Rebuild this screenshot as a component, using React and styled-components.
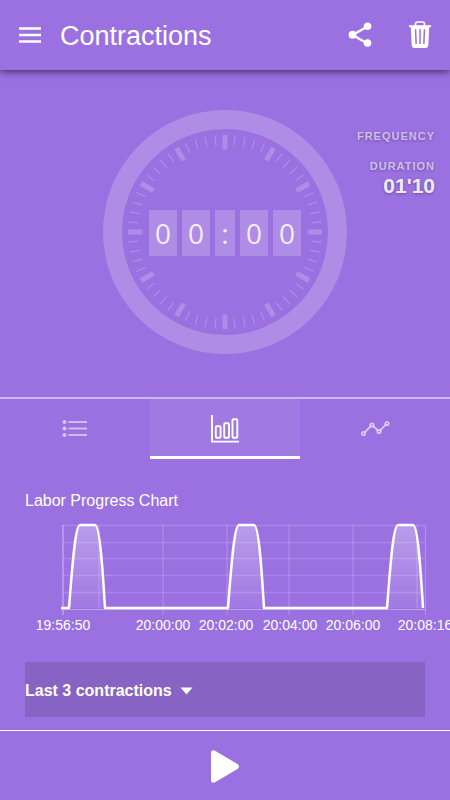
import React, { useState } from "react";
import styled, { createGlobalStyle, ThemeProvider } from "styled-components";

const theme = {
  color: {
    primary: "#9b71e2",
    field: "#8763c4",
    text: "#fff",
    soft: "rgba(255, 255, 255, 0.6)",
    shape: "rgba(255, 255, 255, 0.2)"
  }
};

const GlobalStyle = createGlobalStyle`
  * {
    box-sizing: border-box;
  }
  body {
    margin: 0;
    font-family: "Liberation Sans", Arial, sans-serif;
    -webkit-font-smoothing: antialiased;
  }
`;

const Screen = styled.div`
  display: flex;
  flex-direction: column;
  min-height: 100vh;
  overflow: hidden;
  color: ${({ theme }) => theme.color.text};
  background: ${({ theme }) => theme.color.primary};
`;

const Header = styled.header`
  display: flex;
  align-items: center;
  height: 70px;
  padding: 0 15px;
  box-shadow: 0 1px 8px rgba(0, 0, 0, 0.7);
`;
const Title = styled.h1`
  flex: 1;
  margin: 0 0 0 15px;
  font-size: 27px;
  line-height: 32px;
  font-weight: 400;
  padding-top: 2px;
`;
const IconButton = styled.button`
  display: flex;
  padding: 0;
  border: 0;
  color: inherit;
  background: none;
  cursor: pointer;
`;
const HeaderActions = styled.div`
  display: flex;
  gap: 30px;
`;

const Timer = styled.section`
  display: grid;
  grid-template-columns: 1fr 244px 1fr;
  padding: 40px 0 43px;
`;
const Dial = styled.div`
  grid-column: 2;
  display: grid;
  place-items: center;
  > * {
    grid-area: 1 / 1;
  }
`;
const Face = styled.svg`
  display: block;
  color: ${({ theme }) => theme.color.shape};
`;
const Readout = styled.div`
  display: flex;
  gap: 5px;
  padding-top: 2px;
  font-family: "Open Sans", "Noto Sans", sans-serif;
  font-size: 28px;
  line-height: 46px;
  color: rgba(255, 255, 255, 0.85);
`;
const Digit = styled.span`
  width: ${({ $narrow }) => ($narrow ? 20 : 28)}px;
  text-align: center;
  background: ${({ theme }) => theme.color.shape};
`;

const Stats = styled.dl`
  margin: 20px 15px 0 0;
  text-align: right;
  text-shadow: 0 1px 3px rgba(0, 0, 0, 0.3);
`;
const StatName = styled.dt`
  font-size: 11px;
  line-height: 12px;
  font-weight: 700;
  letter-spacing: 1px;
  color: ${({ theme }) => theme.color.soft};
`;
const StatValue = styled.dd`
  min-height: 18px;
  margin: 0;
  font-size: 21px;
  line-height: 28px;
  font-weight: 700;
  color: rgba(255, 255, 255, 0.9);
`;

const Tabs = styled.nav`
  display: flex;
  border-top: 2px solid rgba(255, 255, 255, 0.5);
`;
const Tab = styled.button`
  flex: 1;
  display: flex;
  justify-content: center;
  align-items: center;
  height: 60px;
  padding: 2px 0 0;
  border: 0;
  border-bottom: 3px solid ${({ $active }) => ($active ? "#fff" : "transparent")};
  color: ${({ $active, theme }) => ($active ? "#fff" : theme.color.soft)};
  background: ${({ $active }) =>
    $active ? "rgba(255, 255, 255, 0.06)" : "none"};
  cursor: pointer;
`;

const Content = styled.main`
  flex: 1;
  padding: 32px 25px 13px;
`;
const ChartTitle = styled.h2`
  margin: 0 0 4px;
  font-size: 16px;
  line-height: 20px;
  font-weight: 400;
`;
const ChartSvg = styled.svg`
  display: block;
  width: 100%;
  overflow: visible;
  text {
    font-size: 14px;
    text-anchor: middle;
    fill: #fff;
  }
`;
const Filter = styled.label`
  display: flex;
  align-items: center;
  gap: 8px;
  height: 55px;
  margin-top: 27px;
  padding-top: 2px;
  background: ${({ theme }) => theme.color.field};
`;
const Select = styled.select`
  appearance: none;
  padding: 0;
  border: 0;
  font: 700 16px/20px "Liberation Sans", Arial, sans-serif;
  color: inherit;
  background: none;
  cursor: pointer;
`;

const Footer = styled.footer`
  display: flex;
  justify-content: center;
  align-items: center;
  height: 70px;
  padding-top: 2px;
  border-top: 1px solid #fff;
`;

const MenuIcon = () => (
  <svg width="30" height="30" stroke="currentColor" strokeWidth="2.4">
    <path d="M4 8.5h22M4 15h22M4 21.5h22" />
  </svg>
);

const ShareIcon = () => (
  <svg width="30" height="30" fill="currentColor">
    <path
      d="M22.5 6.5L7.5 15l15 8.5"
      fill="none"
      stroke="currentColor"
      strokeWidth="2.4"
    />
    <circle cx="7.5" cy="14.7" r="3.9" />
    <circle cx="22.5" cy="6.2" r="3.8" />
    <circle cx="22.5" cy="23" r="3.8" />
  </svg>
);

const TrashIcon = () => (
  <svg width="30" height="30" fill="none" stroke="currentColor">
    <path d="M10.5 6V4q0-2 2-2h5q2 0 2 2v2" strokeWidth="1.6" />
    <path d="M4 6.2h22" strokeWidth="2" />
    <path
      fill="currentColor"
      fillRule="evenodd"
      stroke="none"
      d="M5.7 6h18.6l-1 19.6q-.2 2.4-2.4 2.4H9.1q-2.2 0-2.4-2.4zM9.8 9.2l.6 14.8h1.5l-.6-14.8zM14.3 9.2v14.8h1.5V9.2zM18.7 9.2l-.6 14.8h1.5l.6-14.8z"
    />
  </svg>
);

const ListIcon = () => (
  <svg width="30" height="30" fill="currentColor">
    {[8, 14.5, 21].map(y => (
      <g key={y}>
        <circle cx="4.5" cy={y} r="2" />
        <path d={`M8.5 ${y}h18.5`} stroke="currentColor" strokeWidth="1.8" />
      </g>
    ))}
  </svg>
);

const BarsIcon = () => (
  <svg width="30" height="30" fill="none" stroke="currentColor" strokeWidth="1.9">
    <path d="M2 1v26.600h27" />
    <rect x="5.8" y="12.3" width="4.8" height="11.4" rx="1" />
    <rect x="14.2" y="9.3" width="4.8" height="14.4" rx="1" />
    <rect x="22.5" y="5.3" width="4.8" height="18.4" rx="1" />
  </svg>
);

const trend = [[3.5, 19.5], [12, 11], [19, 17.5], [27, 9.5]];
const TrendIcon = () => (
  <svg width="30" height="30" fill="none" stroke="currentColor" strokeWidth="1.8">
    <path d="M4.7 18.3l6.1-6.1M13.2 12.1l4.6 4.300M20.200 16.300l5.600-5.600" />
    {trend.map(([x, y]) => (
      <circle key={x} cx={x} cy={y} r="1.7" />
    ))}
  </svg>
);

const Caret = () => (
  <svg width="13" height="8" fill="currentColor">
    <path d="M.5.500h12L6.500 7.500z" />
  </svg>
);

const PlayIcon = () => (
  <svg width="30" height="36" fill="currentColor">
    <path d="M1 4.500Q1 0 5 1.700L27.500 15Q30.500 17.500 27.500 20L5 33.300Q1 35 1 30.500z" />
  </svg>
);

const ClockFace = () => (
  <Face width="244" height="244" viewBox="-122 -122 244 244" aria-hidden="true">
    <circle r="112.5" fill="none" stroke="currentColor" strokeWidth="19" />
    {Array.from({ length: 60 }, (_, i) => {
      const major = i % 5 === 0;
      return (
        <line
          key={i}
          y1={-97}
          y2={major ? -82.5 : -87}
          stroke="currentColor"
          strokeWidth={major ? 5 : 1.2}
          transform={`rotate(${i * 6})`}
        />
      );
    })}
  </Face>
);

const rows = [10, 27, 43, 60, 77];
const columns = [74, 138, 202, 264, 328, 392];
const labels = [
  [38, "19:56:50"],
  [138, "20:00:00"],
  [201, "20:02:00"],
  [265, "20:04:00"],
  [328, "20:06:00"],
  [400, "20:08:16"]
];
// x where every contraction starts
const peaks = [44, 203, 362];
const hump = x =>
  `L${x} 93C${x + 3} 55 ${x + 6} 10 ${x + 11} 10H${x + 26}C${x + 31} 10 ${x +
    34} 60 ${x + 36} 93`;

const ProgressChart = () => (
  <ChartSvg viewBox="0 0 400 120" role="img" aria-label="Labor Progress Chart">
    <defs>
      <linearGradient id="area" x1="0" y1="10" x2="0" y2="93" gradientUnits="userSpaceOnUse">
        <stop stopColor="#fff" stopOpacity="0.3" />
        <stop offset="1" stopColor="#fff" stopOpacity="0.06" />
      </linearGradient>
    </defs>
    <g stroke="#fff" strokeOpacity="0.14" strokeWidth="1.5">
      {rows.map(y => (
        <path key={y} d={`M38 ${y}.5H400`} />
      ))}
      {columns.map(x => (
        <path key={x} d={`M${x} 10V${x === 74 || x === 392 ? 94 : 100}`} />
      ))}
    </g>
    <g stroke="#fff" strokeOpacity="0.35">
      <path d="M38 94.5H400.5" />
      <path d="M38 10V100" strokeWidth="1.5" />
      <path d="M400.5 10V100" strokeOpacity="0.25" />
    </g>
    <path fill="url(#area)" d={`M36 93${peaks.map(hump).join("")}z`} />
    <path
      fill="none"
      stroke="#fff"
      strokeWidth="2.5"
      strokeLinejoin="round"
      d={`M36 93${peaks.map(hump).join("")}`}
    />
    {labels.map(([x, label]) => (
      <text key={label} x={x} y="115">
        {label}
      </text>
    ))}
  </ChartSvg>
);

const tabs = [
  { name: "List", icon: ListIcon },
  { name: "Chart", icon: BarsIcon },
  { name: "Trend", icon: TrendIcon }
];

const App = () => {
  const [active, setActive] = useState("Chart");

  return (
    <ThemeProvider theme={theme}>
      <GlobalStyle />
      <Screen>
        <Header>
          <IconButton aria-label="Menu">
            <MenuIcon />
          </IconButton>
          <Title>Contractions</Title>
          <HeaderActions>
            <IconButton aria-label="Share">
              <ShareIcon />
            </IconButton>
            <IconButton aria-label="Delete">
              <TrashIcon />
            </IconButton>
          </HeaderActions>
        </Header>
        <Timer>
          <Dial>
            <ClockFace />
            <Readout>
              <Digit>0</Digit>
              <Digit>0</Digit>
              <Digit $narrow>:</Digit>
              <Digit>0</Digit>
              <Digit>0</Digit>
            </Readout>
          </Dial>
          <Stats>
            <StatName>FREQUENCY</StatName>
            <StatValue />
            <StatName>DURATION</StatName>
            <StatValue>01'10</StatValue>
          </Stats>
        </Timer>
        <Tabs>
          {tabs.map(({ name, icon: TabIcon }) => (
            <Tab
              key={name}
              aria-label={name}
              $active={name === active}
              onClick={() => setActive(name)}
            >
              <TabIcon />
            </Tab>
          ))}
        </Tabs>
        <Content>
          <ChartTitle>Labor Progress Chart</ChartTitle>
          <ProgressChart />
          <Filter>
            <Select aria-label="Contractions shown">
              <option>Last 3 contractions</option>
              <option>Last 6 contractions</option>
            </Select>
            <Caret />
          </Filter>
        </Content>
        <Footer>
          <IconButton aria-label="Start">
            <PlayIcon />
          </IconButton>
        </Footer>
      </Screen>
    </ThemeProvider>
  );
};

export default App;
